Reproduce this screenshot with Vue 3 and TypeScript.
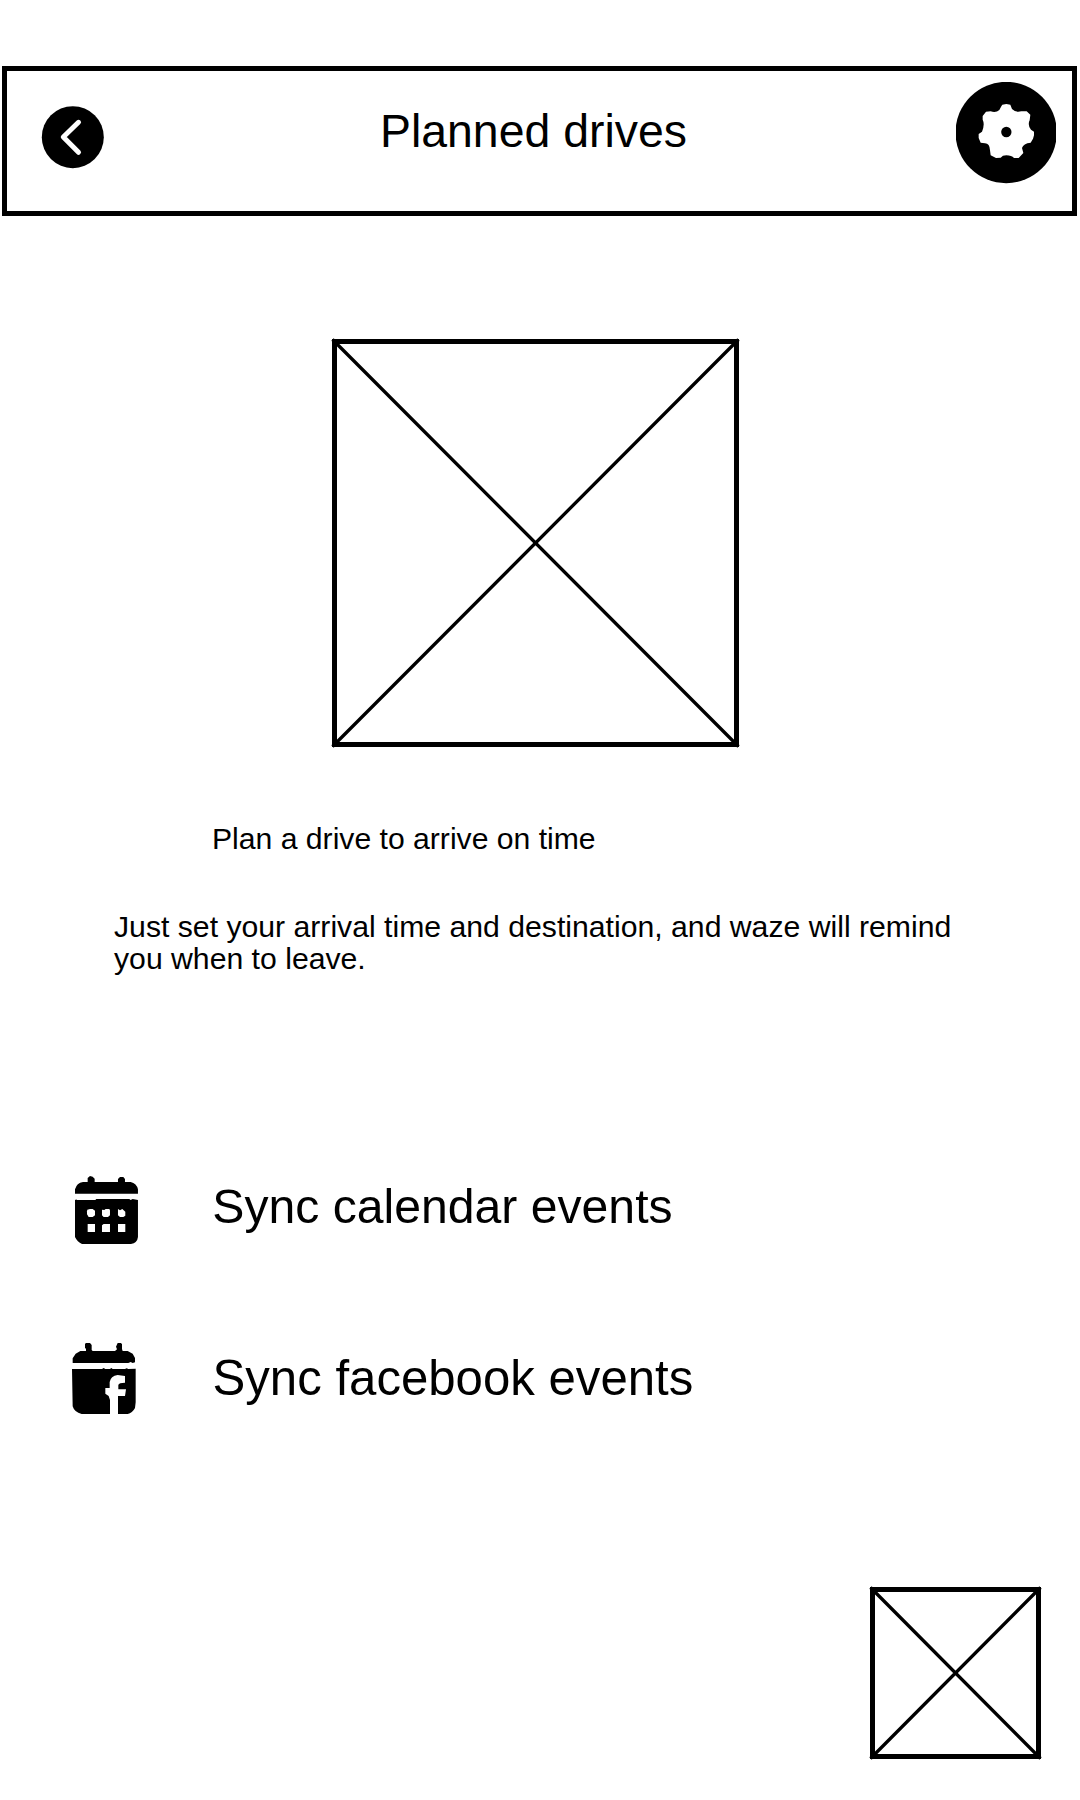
<script setup lang="ts">
interface SyncOption {
  id: 'calendar' | 'facebook'
  label: string
}

const options: SyncOption[] = [
  { id: 'calendar', label: 'Sync calendar events' },
  { id: 'facebook', label: 'Sync facebook events' },
]
</script>

<template>
  <main class="screen">
    <header class="bar">
      <svg class="back" viewBox="0 0 62 62" role="img" aria-label="Back">
        <circle cx="30.800" cy="31.200" r="31" />
        <path d="M36.500 16.300 L21.300 31 L36.500 46.300" fill="none" stroke="#fff" stroke-width="5" stroke-linecap="round" stroke-linejoin="round" />
      </svg>
      <h1 class="title">Planned drives</h1>
      <svg class="settings" viewBox="78 95 300 306" role="img" aria-label="Settings">
        <circle cx="228.500" cy="246.500" r="152" />
        <path
          fill="#fff"
          d="M214 168 L217 163 L229 161 L241 163 L246 176 Q258 188 274 183 L290 183 L301 193 L299 210 Q292 224 303 238 L312 244 L312 255 L309 265 L302 277 Q280 279 276 293 L280 308 L266 323 L252 323 Q245 315 229 315 Q217 315 212 322 L198 323 L182 315 L180 300 Q179 279 165 279 L152 277 L146 263 L146 251 L156 244 Q165 222 158 208 L158 197 L168 184 L182 183 Q198 188 208 179 Z"
        />
        <circle cx="229" cy="245" r="15.500" />
      </svg>
    </header>

    <svg class="picture" viewBox="0 0 407 408">
      <rect x="2.500" y="2.500" width="402" height="403" fill="none" stroke="#000" stroke-width="5" />
      <path d="M0.500 0.500 L406.500 407.500 M406.500 0.500 L0.500 407.500" stroke="#000" stroke-width="3.300" />
    </svg>

    <h2 class="lead">Plan a drive to arrive on time</h2>
    <p class="note">Just set your arrival time and destination, and waze will remind<br />you when to leave.</p>

    <ul class="options">
      <li v-for="option in options" :key="option.id" class="option" :class="option.id">
        <svg v-if="option.id === 'calendar'" class="icon" viewBox="45 48 190 204">
          <path d="M45 101 V88 Q50 69 69 66 H83 V54 L90 48 L98 50 L104 56 V66 H174 V57 L180 51 H190 L195 57 V66 H212 Q230 70 234 88 V101 Z" />
          <path d="M45 121 Q47 117 52 120 H106 L109 117 H208 L212 120 L218 117 L234 120 V231 Q232 249 213 252 H66 Q52 246 45 231 Z" />
          <g fill="#fff">
            <path d="M82 149 L90 147 H98 L105 152 V166 L98 171 H86 L81 163 V154 Z" />
            <path d="M126 149 L133 150 L137 147 H148 L150 151 V166 L144 171 H131 L126 166 Z" />
            <path d="M174 147 L180 151 L187 147 L196 155 V167 L190 171 H180 L174 166 Z" />
            <path d="M83 192 H105 V216 H83 Z" />
            <path d="M131 192 H150 V216 H126 V196 Z" />
            <path d="M174 192 H196 V216 H174 Z" />
          </g>
        </svg>
        <svg v-else class="icon" viewBox="36 39 192 213">
          <path d="M38 99 V85 L47 71 L61 63 H78 V57 L75 53 V41 L79 39 H90 L95 45 V60 L98 63 H165 L171 58 L168 50 L173 39 H183 L186 43 V57 L188 63 H203 L218 71 L225 84 V97 L218 99 L212 96 L205 99 Z" />
          <path d="M36 117 H126 L131 114 L136 117 H150 L154 114 L158 117 H195 L200 115 L205 117 L227 116 V217 L225 234 Q217 249 203 252 H174 V198 H195 L198 178 H175 V165 Q177 158 195 158 V138 L173 135 Q152 138 149 156 V174 H136 V191 L146 198 L150 210 V252 H65 Q43 247 38 229 Z" />
        </svg>
        <span class="label">{{ option.label }}</span>
      </li>
    </ul>

    <svg class="thumb" viewBox="0 0 171 172">
      <rect x="2.500" y="2.500" width="166" height="167" fill="none" stroke="#000" stroke-width="5" />
      <path d="M0.500 0.500 L170.500 171.500 M170.500 0.500 L0.500 171.500" stroke="#000" stroke-width="3.300" />
    </svg>
  </main>
</template>

<style>
body {
  margin: 0;
  background: #fff;
}
</style>

<style scoped>
.screen {
  display: flex;
  flex-direction: column;
  box-sizing: border-box;
  width: 1080px;
  height: 1800px;
  padding-top: 66px;
  overflow: hidden;
  background: #fff;
  color: #000;
  font-family: "Liberation Sans", Arial, sans-serif;
}

svg {
  display: block;
  flex: none;
  overflow: visible;
}

.bar {
  display: flex;
  align-items: flex-start;
  box-sizing: border-box;
  width: 1075px;
  height: 150px;
  margin-left: 2px;
  border: 5px solid #000;
}

.back {
  width: 62px;
  height: 62px;
  margin: 35px 0 0 35px;
}

.title {
  width: 310px;
  margin: 33px 0 0 276px;
  font-size: 46.4px;
  font-weight: 400;
  line-height: 54px;
  white-space: nowrap;
}

.settings {
  width: 100px;
  height: 102px;
  margin: 11px 16px 0 auto;
  overflow: hidden;
}

.picture {
  width: 407px;
  height: 408px;
  margin: 123px 0 0 332px;
}

.lead,
.note {
  font-size: 30.2px;
  font-weight: 400;
  line-height: 32px;
  white-space: nowrap;
}

.lead {
  margin: 76px 0 0 212px;
  font-size: 30.15px;
}

.note {
  margin: 56px 0 0 114px;
}

.options {
  margin: 201px 0 0;
  padding: 0;
  list-style: none;
}

.option {
  display: flex;
  align-items: flex-start;
  height: 167px;
}

.icon {
  width: 63.3px;
  height: 68px;
  margin-left: 75px;
}

.facebook .icon {
  width: 64px;
  height: 71px;
  margin-left: 72px;
}

.label {
  margin: 2px 0 0 74px;
  font-size: 48.15px;
  line-height: 56px;
  white-space: nowrap;
}

.facebook .label {
  margin: 7px 0 0 76.5px;
  font-size: 49.15px;
}

.thumb {
  width: 171px;
  height: 172px;
  margin: 77px 0 0 870px;
}
</style>
